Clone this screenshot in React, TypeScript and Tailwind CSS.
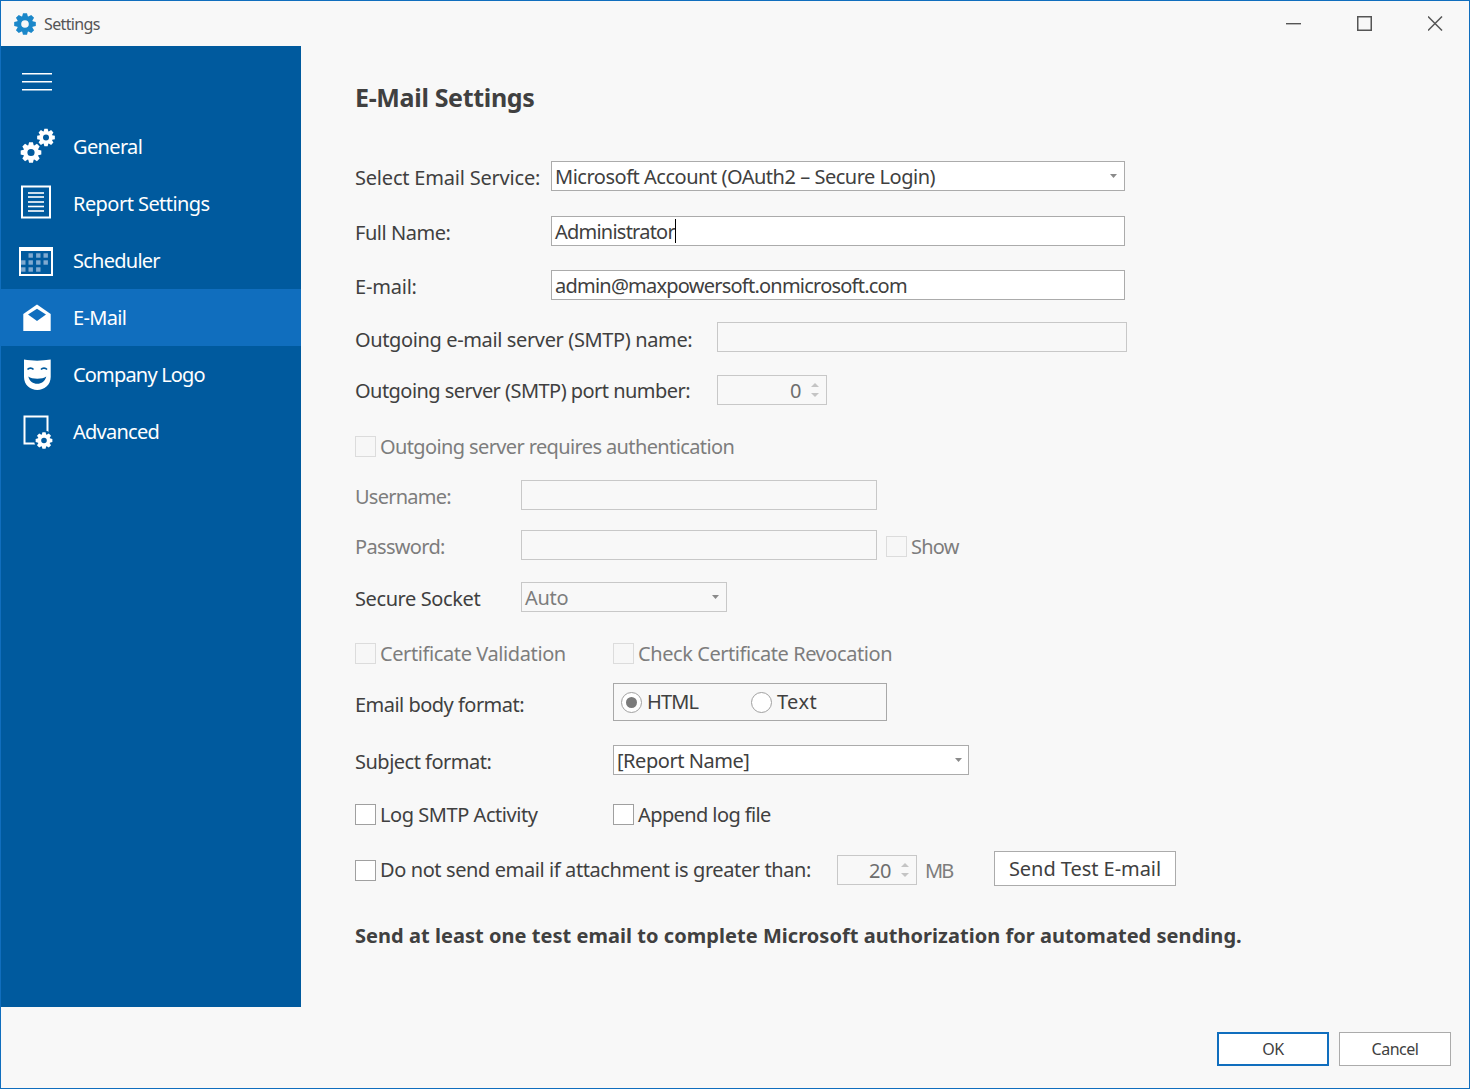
import type { ReactNode } from 'react';

const SIDEBAR = '#005a9e';
const ACTIVE = '#106ebe';

function gearPath(cx: number, cy: number, r: number, hole: number, teeth = 8) {
  const pts: string[] = [];
  const step = (Math.PI * 2) / teeth;
  for (let i = 0; i < teeth; i++) {
    const a = i * step - Math.PI / 2;
    const corners: [number, number][] = [
      [-0.5, 0.74],
      [-0.26, 1],
      [0.26, 1],
      [0.5, 0.74],
    ];
    for (const [o, k] of corners) {
      const t = a + o * step * 0.9;
      pts.push(`${(cx + Math.cos(t) * r * k).toFixed(2)} ${(cy + Math.sin(t) * r * k).toFixed(2)}`);
    }
  }
  const ring = `M${cx - hole} ${cy}a${hole} ${hole} 0 1 0 ${hole * 2} 0a${hole} ${hole} 0 1 0 ${-hole * 2} 0Z`;
  return `M${pts.join('L')}Z${ring}`;
}

function Gear({ cx, cy, r, hole, fill = 'white' }: { cx: number; cy: number; r: number; hole: number; fill?: string }) {
  return <path d={gearPath(cx, cy, r, hole)} fill={fill} fillRule="evenodd" />;
}

const icons: Record<string, ReactNode> = {
  general: (
    <>
      <Gear cx={14} cy={25.5} r={10.5} hole={3.6} />
      <Gear cx={29} cy={10.5} r={9} hole={3} />
    </>
  ),
  report: (
    <>
      <rect x="5" y="2.5" width="28" height="31" fill="none" stroke="white" strokeWidth="2" />
      {[9, 13, 18, 22.5, 27].map((y) => (
        <rect key={y} x="11" y={y - 0.8} width="16" height="1.6" fill="white" />
      ))}
    </>
  ),
  scheduler: (
    <>
      <rect x="3" y="7" width="32" height="27" fill="none" stroke="white" strokeWidth="2" />
      <rect x="3" y="7" width="32" height="3" fill="white" />
      {[
        [13.7, 14.5],
        [21.3, 14.5],
        [28.7, 14.5],
        [6.3, 21.5],
        [13.7, 21.5],
        [21.3, 21.5],
        [28.7, 21.5],
        [6.3, 28.5],
        [13.7, 28.5],
        [21.3, 28.5],
      ].map(([x, y]) => (
        <rect key={`${x}-${y}`} x={x - 2.2} y={y - 2.2} width="4.4" height="4.4" fill="#7fa9d0" />
      ))}
    </>
  ),
  email: (
    <>
      <path d="M6.3 16L20 6.5L33.7 16V33H6.3Z" fill="white" />
      <path d="M11 16.5L20 10.8L29 16.5L20 23Z" fill={ACTIVE} />
    </>
  ),
  logo: (
    <>
      <path d="M7 4.5C15 6 25 6 33.7 4.5V22C33.7 30 27 35 20.3 35C13.5 35 7 30 7 22Z" fill="white" />
      <path d="M10.5 14.6C12 12.6 15 12.6 16.5 14.6" fill="none" stroke={SIDEBAR} strokeWidth="1.6" />
      <path d="M24 14.6C25.5 12.6 28.5 12.6 30 14.6" fill="none" stroke={SIDEBAR} strokeWidth="1.6" />
      <path d="M11.3 21.5C15 24.5 25.5 24.5 29.3 21.5C28 26.5 24.5 28.8 20.3 28.8C16 28.8 12.5 26.5 11.3 21.5Z" fill={SIDEBAR} />
    </>
  ),
  advanced: (
    <>
      <rect x="7.5" y="4.5" width="23" height="27" fill="none" stroke="white" strokeWidth="2" />
      <circle cx="27" cy="28.5" r="10" fill={SIDEBAR} />
      <Gear cx={27} cy={28.5} r={8.5} hole={2.8} />
    </>
  ),
};

const navItems = [
  { key: 'general', label: 'General', track: 'tracking-[-0.65px]' },
  { key: 'report', label: 'Report Settings', track: 'tracking-[-0.55px]' },
  { key: 'scheduler', label: 'Scheduler', track: 'tracking-[-0.75px]' },
  { key: 'email', label: 'E-Mail', track: 'tracking-[-0.65px]' },
  { key: 'logo', label: 'Company Logo', track: 'tracking-[-0.82px]' },
  { key: 'advanced', label: 'Advanced', track: 'tracking-[-0.75px]' },
];

function Caret() {
  return (
    <svg width="7" height="4" viewBox="0 0 7 4" className="shrink-0">
      <path d="M0 0H7L3.5 4Z" fill="#8a8a8a" />
    </svg>
  );
}

function Check({ disabled, label, className, labelClass }: { disabled?: boolean; label: string; className?: string; labelClass?: string }) {
  return (
    <div className={`flex items-center ${className ?? ''}`}>
      <span className={`w-[21px] h-[21px] shrink-0 border ${disabled ? 'border-[#dcdcdc] bg-[#f7f7f7]' : 'border-[#a0a0a0] bg-white'}`} />
      <span className={`ml-1 ${disabled ? 'text-[#7d7d7d]' : ''} ${labelClass ?? ''}`}>{label}</span>
    </div>
  );
}

function Spin({ value, className }: { value: string; className: string }) {
  return (
    <div className={`h-[30px] flex items-center justify-end pr-[5px] border border-[#c8c8c8] text-[#6e6e6e] ${className}`}>
      <span className="pt-[2px]">{value}</span>
      <span className="ml-[7px] w-[13px] flex flex-col items-center gap-[6px]">
        <svg width="8" height="4" viewBox="0 0 8 4"><path d="M0 4L4 0L8 4Z" fill="#c4c4c4" /></svg>
        <svg width="8" height="4" viewBox="0 0 8 4"><path d="M0 0H8L4 4Z" fill="#c4c4c4" /></svg>
      </span>
    </div>
  );
}

function Box({ className, children }: { className: string; children?: ReactNode }) {
  return <div className={`h-[30px] flex items-center pl-[3px] border tracking-[-0.77px] ${className}`}>{children}</div>;
}

export default function App() {
  return (
    <div
      className="w-[1470px] h-[1089px] flex flex-col border border-[#106ebe] bg-[#f8f8f8] text-[#404040] text-[20px] tracking-[-0.45px] overflow-hidden"
      style={{ fontFamily: '"Noto Sans", "Open Sans", sans-serif' }}
    >
      {/* Title bar */}
      <header className="h-[45px] shrink-0 flex items-center pl-[13px] pr-[26px]">
        <svg width="22" height="22" viewBox="0 0 22 22">
          <Gear cx={11} cy={11} r={11} hole={3.8} fill="#1b87c9" />
        </svg>
        <span className="ml-2 text-[16px] tracking-[-0.65px] text-[#555555]">Settings</span>
        <div className="ml-auto flex items-center gap-[56px]">
          <svg width="15" height="15" viewBox="0 0 15 15"><rect y="7" width="15" height="1.4" fill="#555555" /></svg>
          <svg width="15" height="15" viewBox="0 0 15 15"><rect x="0.75" y="0.75" width="13.5" height="13.5" fill="none" stroke="#555555" strokeWidth="1.5" /></svg>
          <svg width="15" height="15" viewBox="0 0 15 15"><path d="M0 0.5L14 14.5M14 0.5L0 14.5" stroke="#555555" strokeWidth="1.5" /></svg>
        </div>
      </header>

      <div className="h-[961px] shrink-0 flex">
        {/* Sidebar */}
        <nav className="w-[300px] shrink-0 bg-[#005a9e] text-white">
          <div className="h-[72px] flex items-center pl-[21px]">
            <svg width="30" height="18" viewBox="0 0 30 18">
              <rect y="0" width="30" height="1.5" fill="white" />
              <rect y="8" width="30" height="1.5" fill="white" />
              <rect y="16" width="30" height="1.5" fill="white" />
            </svg>
          </div>
          {navItems.map((item) => (
            <div key={item.key} className={`h-[57px] flex items-center pl-[16px] gap-4 ${item.key === 'email' ? 'bg-[#106ebe]' : ''}`}>
              <svg width="40" height="40" viewBox="0 0 40 40" className="shrink-0">{icons[item.key]}</svg>
              <span className={item.track}>{item.label}</span>
            </div>
          ))}
        </nav>

        {/* Form */}
        <main className="flex-1 pl-[54px]">
          <h1 className="mt-[36px] h-[30px] leading-[30px] text-[25px] font-bold tracking-[-0.33px]">E-Mail Settings</h1>

          <div className="mt-[49px] h-[30px] flex items-center">
            <label className="w-[196px] pt-[4px] tracking-[-0.2px]">Select Email Service:</label>
            <Box className="w-[574px] bg-white border-[#ababab] pr-[7px] justify-between">
              <span className="pt-[2px] tracking-[-0.48px]">Microsoft Account (OAuth2 – Secure Login)</span>
              <Caret />
            </Box>
          </div>
          <div className="mt-[25px] h-[30px] flex items-center">
            <label className="w-[196px] pt-[3px]">Full Name:</label>
            <Box className="w-[574px] bg-white border-[#ababab]">
              <span className="pt-[2px]">Administrator</span>
              <span className="w-px h-[24px] bg-black" />
            </Box>
          </div>
          <div className="mt-[24px] h-[30px] flex items-center">
            <label className="w-[196px] pt-[3px] tracking-[-0.2px]">E-mail:</label>
            <Box className="w-[574px] bg-white border-[#ababab]">
              <span className="pt-[2px]">admin@maxpowersoft.onmicrosoft.com</span>
            </Box>
          </div>
          <div className="mt-[22px] h-[30px] flex items-center">
            <label className="w-[362px] pt-[5px] tracking-[-0.37px]">Outgoing e-mail server (SMTP) name:</label>
            <Box className="w-[410px] border-[#c8c8c8]" />
          </div>
          <div className="mt-[23px] h-[30px] flex items-center">
            <label className="w-[362px] pt-[2px] tracking-[-0.54px]">Outgoing server (SMTP) port number:</label>
            <Spin value="0" className="w-[110px]" />
          </div>

          <Check disabled label="Outgoing server requires authentication" className="mt-[31px] h-[21px]" labelClass="tracking-[-0.62px]" />

          <div className="mt-[23px] h-[30px] flex items-center">
            <label className="w-[166px] pt-[3px] text-[#7d7d7d] tracking-[-0.75px]">Username:</label>
            <Box className="w-[356px] border-[#c8c8c8]" />
          </div>
          <div className="mt-[20px] h-[30px] flex items-center">
            <label className="w-[166px] pt-[3px] text-[#7d7d7d] tracking-[-0.67px]">Password:</label>
            <Box className="w-[356px] border-[#c8c8c8]" />
            <Check disabled label="Show" className="ml-[9px] pt-[3px]" labelClass="tracking-[-0.75px]" />
          </div>
          <div className="mt-[22px] h-[30px] flex items-center">
            <label className="w-[166px] pt-[3px] tracking-[-0.4px]">Secure Socket</label>
            <Box className="w-[206px] border-[#c8c8c8] text-[#7d7d7d] pr-[7px] justify-between">
              <span className="pt-[2px] tracking-[-0.3px]">Auto</span>
              <Caret />
            </Box>
          </div>

          <div className="mt-[31px] h-[21px] flex items-center">
            <Check disabled label="Certificate Validation" className="w-[258px]" labelClass="tracking-[-0.4px]" />
            <Check disabled label="Check Certificate Revocation" labelClass="tracking-[-0.43px]" />
          </div>

          <div className="mt-[19px] h-[38px] flex items-center">
            <label className="w-[258px] pt-[6px] tracking-[-0.52px]">Email body format:</label>
            <div className="w-[274px] h-[38px] border border-[#a8a8a8] flex items-center pl-[7px]">
              <span className="w-[21px] h-[21px] rounded-full border border-[#a0a0a0] bg-white flex items-center justify-center">
                <span className="w-[11px] h-[11px] rounded-full bg-[#7a7a7a]" />
              </span>
              <span className="ml-[5px] w-[104px] tracking-[-0.85px]">HTML</span>
              <span className="w-[21px] h-[21px] rounded-full border border-[#a0a0a0] bg-white" />
              <span className="ml-[5px] tracking-[0.4px]">Text</span>
            </div>
          </div>

          <div className="mt-[24px] h-[30px] flex items-center">
            <label className="w-[258px] pt-[3px] tracking-[-0.5px]">Subject format:</label>
            <Box className="w-[356px] bg-white border-[#ababab] pr-[6px] justify-between">
              <span className="pt-[2px] tracking-[-0.46px]">[Report Name]</span>
              <Caret />
            </Box>
          </div>

          <div className="mt-[29px] h-[21px] flex items-center">
            <Check label="Log SMTP Activity" className="w-[258px]" labelClass="tracking-[-0.45px]" />
            <Check label="Append log file" labelClass="tracking-[-0.6px]" />
          </div>

          <div className="mt-[26px] h-[35px] flex items-start">
            <Check label="Do not send email if attachment is greater than:" className="w-[482px] h-[30px] mt-[4px]" labelClass="tracking-[-0.4px]" />
            <Spin value="20" className="w-[80px] mt-[4px]" />
            <span className="ml-2 w-[69px] mt-[5px] text-[#7d7d7d] tracking-[-2px]">MB</span>
            <button className="w-[182px] h-[35px] bg-white border border-[#ababab] tracking-[-0.05px]">Send Test E-mail</button>
          </div>

          <p className="mt-[35px] h-[30px] leading-[30px] font-bold tracking-[0.04px]">
            Send at least one test email to complete Microsoft authorization for automated sending.
          </p>
        </main>
      </div>

      {/* Footer buttons */}
      <footer className="flex-1 flex justify-end items-start gap-[10px] pt-[25px] pr-[18px] text-[16px] tracking-[-0.5px]">
        <button className="w-[112px] h-[34px] bg-white border-2 border-[#106ebe]">OK</button>
        <button className="w-[112px] h-[34px] bg-white border border-[#ababab]">Cancel</button>
      </footer>
    </div>
  );
}
